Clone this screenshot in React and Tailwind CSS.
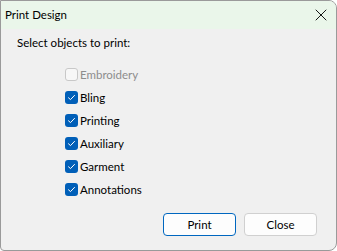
import { X } from 'lucide-react'

const items = [
  { label: 'Embroidery', checked: false, disabled: true },
  { label: 'Bling', checked: true },
  { label: 'Printing', checked: true },
  { label: 'Auxiliary', checked: true },
  { label: 'Garment', checked: true },
  { label: 'Annotations', checked: true },
]

function Check({ checked, disabled }) {
  if (!checked) {
    return (
      <span className={`w-[13px] h-[13px] rounded-[3px] border ${disabled ? 'border-[#c8c8c8] bg-[#f7f7f7]' : 'border-[#8a8a8a] bg-white'}`} />
    )
  }
  return (
    <span className="w-[13px] h-[13px] rounded-[3px] bg-[#005fb8] flex items-center justify-center">
      <svg width="9" height="9" viewBox="0 0 9 9" fill="none">
        <path d="M1.5 4.8 L3.5 6.6 L7.5 2.4" stroke="white" strokeWidth="1" strokeLinecap="round" strokeLinejoin="round" />
      </svg>
    </span>
  )
}

export default function App() {
  return (
    <div className="w-[337px] h-[251px] bg-white" style={{ fontFamily: 'Lato, "Noto Sans", sans-serif' }}>
      <div className="w-full h-full flex flex-col border border-[#9a9a9a] rounded-tr-[8px] rounded-br-[8px] rounded-bl-[4px] overflow-hidden bg-[#f0f0f0]">
        {/* title bar */}
        <div className="h-[28px] bg-[#eaf6ea] flex items-center justify-between pl-[4px] pr-[5px]">
          <span className="text-[11.5px] text-black leading-none">Print Design</span>
          <X size={20} strokeWidth={1.1} className="text-black" />
        </div>

        <div className="flex-1 flex flex-col">
          <div className="pl-[16px] pt-[6px] text-[11.5px] text-black leading-[16px]">Select objects to print:</div>

          <div className="flex flex-col pl-[64px] mt-[12px]">
            {items.map(it => (
              <div key={it.label} className="h-[23px] flex items-center gap-[2px]">
                <Check checked={it.checked} disabled={it.disabled} />
                <span className={`text-[11.5px] leading-none ${it.disabled ? 'text-[#8d8d8d]' : 'text-black'}`}>{it.label}</span>
              </div>
            ))}
          </div>

          <div className="flex justify-end gap-[8px] pr-[19px] mt-[12px]">
            <button className="w-[73px] h-[23px] rounded-[4px] border border-[#0067c0] bg-[#fdfdfd] text-[11.5px] text-black">Print</button>
            <button className="w-[73px] h-[23px] rounded-[4px] border border-[#d0d0d0] bg-[#fdfdfd] text-[11.5px] text-black">Close</button>
          </div>
        </div>
      </div>
    </div>
  )
}
